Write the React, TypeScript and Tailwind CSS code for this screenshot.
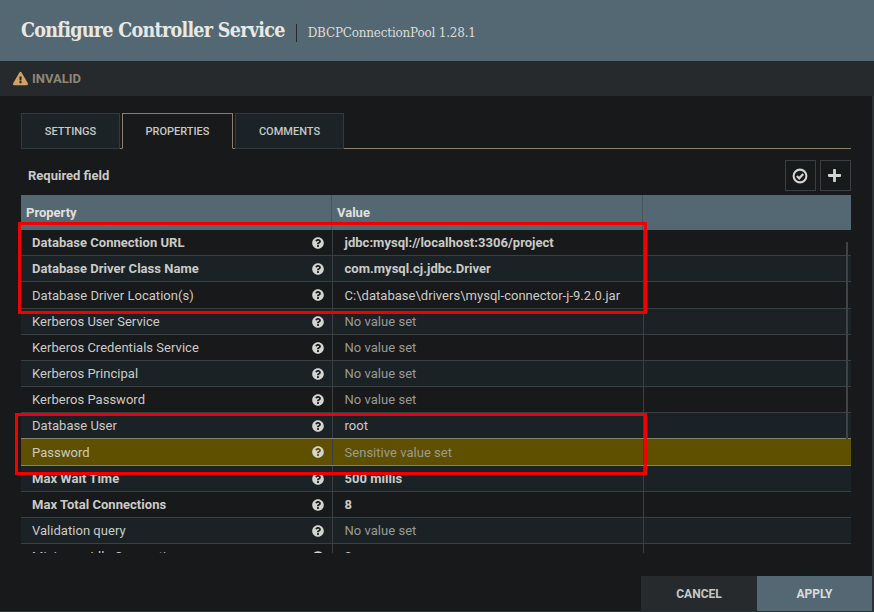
import { FaExclamationTriangle, FaPlus, FaQuestionCircle } from "react-icons/fa";

type Row = { name: string; value: string; required?: boolean; muted?: boolean };

const rows: Row[] = [
  { name: "Database Connection URL", value: "jdbc:mysql://localhost:3306/project", required: true },
  { name: "Database Driver Class Name", value: "com.mysql.cj.jdbc.Driver", required: true },
  { name: "Database Driver Location(s)", value: "C:\\database\\drivers\\mysql-connector-j-9.2.0.jar" },
  { name: "Kerberos User Service", value: "No value set", muted: true },
  { name: "Kerberos Credentials Service", value: "No value set", muted: true },
  { name: "Kerberos Principal", value: "No value set", muted: true },
  { name: "Kerberos Password", value: "No value set", muted: true },
  { name: "Database User", value: "root" },
  { name: "Password", value: "Sensitive value set", muted: true },
  { name: "Max Wait Time", value: "500 millis", required: true },
  { name: "Max Total Connections", value: "8", required: true },
  { name: "Validation query", value: "No value set", muted: true },
  { name: "Minimum Idle Connections", value: "0" },
];

function Tab({ label, active, width }: { label: string; active?: boolean; width: string }) {
  return (
    <div
      className={`${width} flex h-[36px] items-center justify-center border pt-[3px] text-[11px] font-medium ${
        active ? "border-[#8a7f6c] border-b-[#18191b] bg-[#18191b] -mb-px" : "border-[#333a3e] bg-[#1c2327]"
      } text-[#c8c8c4]`}
    >
      {label}
    </div>
  );
}

export default function App() {
  return (
    <div className="relative flex h-[612px] w-[874px] flex-col overflow-hidden bg-[#18191b] font-['Roboto',sans-serif] text-[#cbcbc6]">
      <div className="flex h-[61px] items-center bg-[#546873] pl-[21px]">
        <span className="font-['DejaVu_Serif_Condensed','DejaVu_Serif',serif] text-[19.5px] font-bold tracking-[-0.7px] text-[#e8e8e4]">
          Configure Controller Service
        </span>
        <span className="ml-[11px] mt-[4px] h-[18px] w-px bg-[#26292b]" />
        <span className="ml-[11px] mt-[4px] font-['DejaVu_Serif',serif] text-[12px] tracking-[-0.2px] text-[#dcdcd8]">
          DBCPConnectionPool 1.28.1
        </span>
      </div>

      <div className="flex h-[35px] items-center gap-[4px] bg-[#262a2c] pl-[13px]">
        <FaExclamationTriangle className="text-[15px] text-[#cfa266]" />
        <span className="text-[13px] font-bold text-[#8f8678]">INVALID</span>
      </div>

      <div className="flex flex-1 flex-col pl-[21px] pr-[23px] pt-[17px]">
        <div className="flex gap-[2px] border-b border-[#8a7f6c] h-[36px]">
          <Tab label="SETTINGS" width="w-[99px]" />
          <Tab label="PROPERTIES" active width="w-[111px]" />
          <Tab label="COMMENTS" width="w-[109px]" />
        </div>

        <div className="flex h-[46px] items-center justify-between">
          <span className="pl-[7px] pt-[8px] text-[13px] font-bold">Required field</span>
          <div className="flex gap-[4px] pt-[7px]">
            <button className="flex h-[31px] w-[31px] items-center justify-center border border-[#3a3f42] pr-[1px] text-[#d4d4d0]">
              <svg width="16" height="16" viewBox="0 0 16 16" fill="none" stroke="currentColor">
                <circle cx="8" cy="8" r="6.4" strokeWidth="2.1" />
                <path d="M4.9 8 L7.2 10.3 L11.2 6" strokeWidth="2.2" />
              </svg>
            </button>
            <button className="flex h-[31px] w-[31px] items-center justify-center border border-[#3a3f42] pr-[2px] text-[15px] text-[#d4d4d0]">
              <FaPlus />
            </button>
          </div>
        </div>

        <div className="flex h-[35px] bg-[#546873] text-[13px] font-bold text-[#e0e0dc]">
          <div className="flex w-[311px] items-center pl-[5px] pt-[1px] border-r border-[#46555e]">Property</div>
          <div className="flex w-[311px] items-center pl-[5px] pt-[1px] border-r border-[#46555e]">Value</div>
        </div>

        <div className="relative h-[323px] overflow-hidden">
          {rows.map((row, i) => (
            <div
              key={row.name}
              className={`flex h-[26.18px] items-center border-b text-[13px] tracking-[0.03px] ${
                row.name === "Password"
                  ? "border-[#85806a] bg-[#5f5000]"
                  : i === 7
                    ? "border-[#85806a] bg-[#1a2226]"
                    : i % 2 === 1
                      ? "border-[#3a3f42] bg-[#1a2226]"
                      : "border-[#3a3f42] bg-[#18191b]"
              } ${row.required ? "font-bold" : ""}`}
            >
              <div className="flex h-full w-[312px] items-center justify-between border-r border-[#3a3f42] pl-[11px] pr-[8px] pt-[0.8px]">
                <span>{row.name}</span>
                <FaQuestionCircle className="text-[12px] text-[#d4d4d0]" />
              </div>
              <div
                className={`flex h-full w-[311px] items-center border-r border-[#3a3f42] pl-[11.5px] pt-[0.8px] ${
                  row.muted ? "text-[#9a9a94]" : ""
                }`}
              >
                {row.value}
              </div>
            </div>
          ))}
          <div className="absolute right-[3px] top-[12px] h-[198px] w-[2px] bg-[#3f4447]" />
        </div>
      </div>

      <div className="absolute bottom-[1px] right-[2px] flex h-[35px] text-[12px] font-bold">
        <button className="w-[116px] bg-[#262a2c] text-[#c8c8c4]">CANCEL</button>
        <button className="w-[115px] bg-[#546873] text-[#dcdcd8]">APPLY</button>
      </div>

      {/* edge of the dialog at the right and bottom */}
      <div className="absolute bottom-0 right-0 top-[96px] w-[2px] bg-[#2a3236]" />
      <div className="absolute bottom-0 left-0 right-0 h-px bg-[#2a3236]" />

      {/* red boxes drawn on top of the screenshot */}
      <div className="absolute left-[18px] top-[222px] h-[92px] w-[629px] border-[3px] border-[#f00000]" />
      <div className="absolute left-[15px] top-[413px] h-[62px] w-[632px] border-[3px] border-[#f00000]" />
    </div>
  );
}
